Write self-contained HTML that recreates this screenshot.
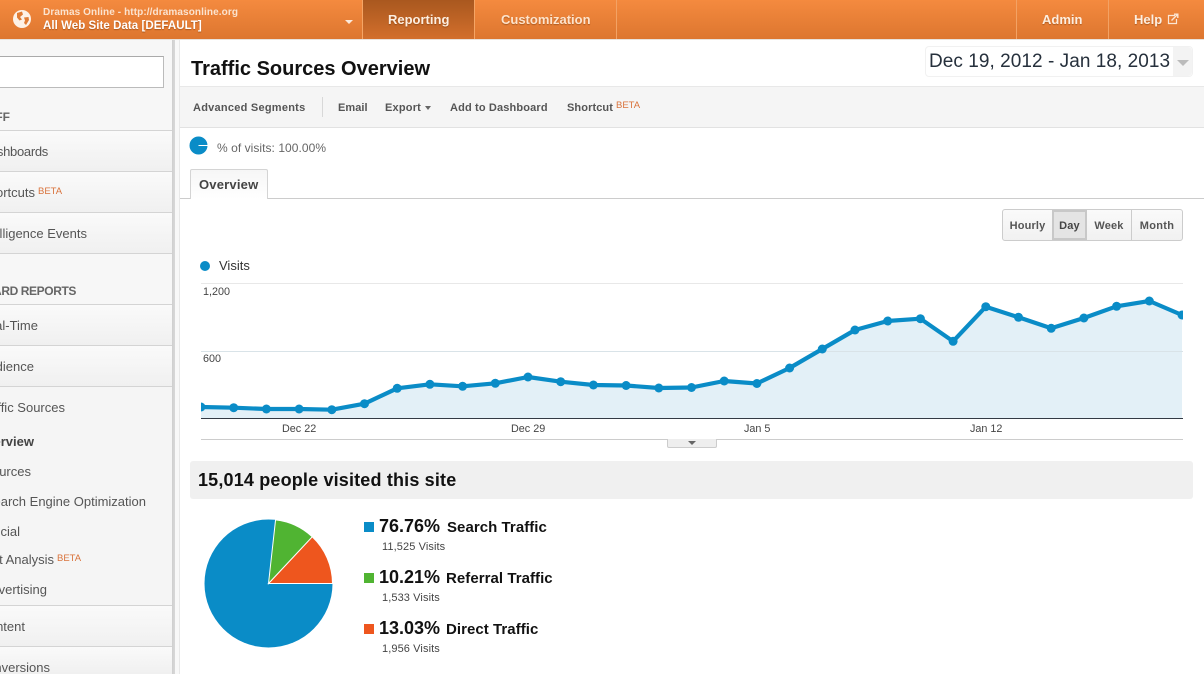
<!DOCTYPE html>
<html><head><meta charset="utf-8"><title>Traffic Sources Overview</title>
<style>
html,body{margin:0;padding:0;width:1204px;height:674px;overflow:hidden;background:#fff;font-family:"Liberation Sans",Arial,sans-serif}
#w{position:relative;width:1204px;height:674px;overflow:hidden}
.a,.t,.r{position:absolute;white-space:nowrap}
.r{line-height:16px;font-size:13px;color:#555;margin-top:1px}
.n{color:#fff;font-weight:bold;font-size:13px;line-height:16px;text-shadow:0 1px 1px rgba(90,40,0,.4)}
.sep{position:absolute;left:0;width:172px;height:1px;background:#d4d4d4}
.sb{position:absolute;left:0;width:172px;background:linear-gradient(#fafafa,#f0f0f0)}
.beta{position:absolute;font-size:9.5px;line-height:10px;color:#d9733c;white-space:nowrap}
.tb{font-size:11px;font-weight:bold;color:#555;line-height:14px;position:absolute;white-space:nowrap;letter-spacing:.2px;margin-top:1px}
.v{color:#444;font-size:11px;line-height:12px;position:absolute;white-space:nowrap;letter-spacing:.1px;margin-top:1px}
.p{position:absolute;font-size:18px;font-weight:bold;color:#111;line-height:20px;white-space:nowrap}
.l{position:absolute;font-size:15px;font-weight:bold;color:#111;line-height:20px;white-space:nowrap;letter-spacing:.05px}
.sq{position:absolute;left:364px;width:10px;height:10px}
.rb{position:absolute;top:210px;height:30px;line-height:32px;text-align:center;font-size:11px;font-weight:bold;color:#555;box-sizing:border-box;letter-spacing:.15px}
.ax{position:absolute;font-size:10.8px;color:#444;line-height:12px;white-space:nowrap}
</style></head><body><div id="w">

<!-- top bar -->
<div class="a" style="left:0;top:0;width:1204px;height:39px;background:linear-gradient(#f48a3f,#dd762f)"></div>
<div class="a" style="left:0;top:39px;width:1204px;height:1px;background:#e8e2dc"></div>
<svg class="a" style="left:12px;top:9px" width="20" height="20" viewBox="0 0 20 20"><circle cx="10" cy="10" r="9" fill="#fdf1e6"/><path d="M5 4 L10 2.5 L11 5.5 L8 8 L10 10.5 L7.5 11.5 L5 8.5Z M12 8.5 L16.5 8 L17 11 L14 16 L12 14 L13 11.5Z" fill="#e07c35"/></svg>
<div class="a" style="left:43px;top:6px;font-size:10px;line-height:13px;color:#fbe3cf;font-weight:bold;letter-spacing:.1px">Dramas Online - http://dramasonline.org</div>
<div class="a n" style="left:43px;top:18px;font-size:11.5px;letter-spacing:.05px">All Web Site Data [DEFAULT]</div>
<div class="a" style="left:345px;top:20px;width:0;height:0;border-left:4px solid transparent;border-right:4px solid transparent;border-top:4px solid #fbeadb"></div>
<div class="a" style="left:362px;top:0;width:1px;height:39px;background:#f5a565"></div>
<div class="a" style="left:363px;top:0;width:112px;height:39px;background:linear-gradient(#a9581f,#d36f2c);border-right:1px solid #f5a565;box-sizing:border-box"></div>
<div class="a n" style="left:388px;top:12px;color:#fdeee0">Reporting</div>
<div class="a n" style="left:501px;top:12px;color:#fde3cc">Customization</div>
<div class="a" style="left:616px;top:0;width:1px;height:39px;background:#f3a264"></div>
<div class="a" style="left:1016px;top:0;width:1px;height:39px;background:#f3a264"></div>
<div class="a" style="left:1108px;top:0;width:1px;height:39px;background:#f3a264"></div>
<div class="a n" style="left:1042px;top:12px;color:#fdeee0">Admin</div>
<div class="a n" style="left:1134px;top:12px;color:#fdeee0">Help</div>
<svg class="a" style="left:1167px;top:13px" width="12" height="12" viewBox="0 0 12 12"><path d="M8 2.5H1.5V10.5H9.5V6" fill="none" stroke="#fbe6d4" stroke-width="1.2"/><path d="M4.5 7.5 L10 2 M7 1.2H10.8V5" fill="none" stroke="#fbe6d4" stroke-width="1.4"/></svg>

<!-- sidebar -->
<div class="a" style="left:0;top:40px;width:172px;height:634px;background:#f5f5f5"></div>
<div class="sb" style="top:40px;height:90px;background:#f7f7f7"></div>
<div class="sb" style="top:131px;height:40px"></div>
<div class="sb" style="top:172px;height:40px"></div>
<div class="sb" style="top:213px;height:40px"></div>
<div class="sb" style="top:254px;height:50px;background:#f7f7f7"></div>
<div class="sb" style="top:305px;height:40px"></div>
<div class="sb" style="top:346px;height:40px"></div>
<div class="sb" style="top:606px;height:40px"></div>
<div class="sb" style="top:647px;height:27px"></div>
<div class="sep" style="top:130px"></div><div class="sep" style="top:171px"></div><div class="sep" style="top:212px"></div><div class="sep" style="top:253px"></div><div class="sep" style="top:304px"></div><div class="sep" style="top:345px"></div><div class="sep" style="top:386px"></div><div class="sep" style="top:605px"></div><div class="sep" style="top:646px"></div>
<div class="a" style="left:172px;top:40px;width:3px;height:634px;background:linear-gradient(90deg,#cfcfcf,#d8d8d8)"></div>
<div class="a" style="left:175px;top:40px;width:4px;height:634px;background:#f8f8f8"></div>
<div class="a" style="left:179px;top:40px;width:1px;height:634px;background:#e8e8e8"></div>
<div class="a" style="left:-5px;top:56px;width:169px;height:32px;box-sizing:border-box;border:1px solid #bbb;border-top-color:#aaa;background:#fff"></div>

<div class="r" style="right:1194px;top:108px;font-weight:bold;font-size:12px;color:#666">MY STUFF</div>
<div class="r" style="right:1156px;top:143px;letter-spacing:-.3px">Dashboards</div>
<div class="r" style="right:1169px;top:184px">Shortcuts</div>
<div class="beta" style="left:38px;top:187px">BETA</div>
<div class="r" style="right:1117px;top:225px">Intelligence Events</div>
<div class="r" style="right:1128px;top:282px;font-weight:bold;font-size:12px;color:#666;letter-spacing:-.4px">STANDARD REPORTS</div>
<div class="r" style="right:1166px;top:317px">Real-Time</div>
<div class="r" style="right:1170px;top:358px">Audience</div>
<div class="r" style="right:1139px;top:399px">Traffic Sources</div>
<div class="r" style="right:1170px;top:433px;font-weight:bold;color:#444">Overview</div>
<div class="r" style="right:1173px;top:463px">Sources</div>
<div class="r" style="right:1058px;top:493px">Search Engine Optimization</div>
<div class="r" style="right:1184px;top:523px">Social</div>
<div class="r" style="right:1150px;top:551px">Cost Analysis</div>
<div class="beta" style="left:57px;top:554px">BETA</div>
<div class="r" style="right:1157px;top:581px">Advertising</div>
<div class="r" style="right:1179px;top:618px">Content</div>
<div class="r" style="right:1154px;top:659px">Conversions</div>

<!-- title -->
<div class="a" style="left:191px;top:57px;font-size:20px;line-height:24px;font-weight:bold;color:#111">Traffic Sources Overview</div>
<div class="a" style="left:925px;top:46px;width:268px;height:31px;box-sizing:border-box;border:1px solid #f1f1f1;border-radius:4px;background:#fff"></div>
<div class="a" style="left:1173px;top:47px;width:19px;height:29px;background:#f3f3f3;border-radius:0 4px 4px 0"></div>
<div class="a" style="left:929px;top:50px;font-size:19px;line-height:23px;color:#26303c;letter-spacing:.05px">Dec 19, 2012 - Jan 18, 2013</div>
<div class="a" style="left:1177px;top:60px;width:0;height:0;border-left:6px solid transparent;border-right:6px solid transparent;border-top:6px solid #bbb"></div>

<!-- toolbar -->
<div class="a" style="left:180px;top:86px;width:1024px;height:42px;box-sizing:border-box;background:#f5f5f5;border-top:1px solid #e8e8e8;border-bottom:1px solid #e2e2e2"></div>
<div class="tb" style="left:193px;top:100px;letter-spacing:.25px">Advanced Segments</div>
<div class="a" style="left:322px;top:97px;width:1px;height:20px;background:#d8d8d8"></div>
<div class="tb" style="left:338px;top:100px;letter-spacing:.05px">Email</div>
<div class="tb" style="left:385px;top:100px">Export</div>
<div class="a" style="left:425px;top:106px;width:0;height:0;border-left:3.5px solid transparent;border-right:3.5px solid transparent;border-top:4px solid #666"></div>
<div class="tb" style="left:450px;top:100px;letter-spacing:.15px">Add to Dashboard</div>
<div class="tb" style="left:567px;top:100px;letter-spacing:.1px">Shortcut</div>
<div class="beta" style="left:616px;top:101px">BETA</div>

<!-- segment -->
<svg class="a" style="left:189px;top:136px" width="19" height="19" viewBox="0 0 19 19"><circle cx="9.500" cy="9.500" r="9" fill="#0a8cc7"/><path d="M9.500 9.500H18.500" stroke="#fff" stroke-width="1"/></svg>
<div class="a" style="left:217px;top:141px;font-size:12px;line-height:15px;color:#666;letter-spacing:.05px">% of visits: 100.00%</div>

<!-- tab -->
<div class="a" style="left:180px;top:198px;width:1024px;height:1px;background:#ccc"></div>
<div class="a" style="left:190px;top:169px;width:78px;height:30px;box-sizing:border-box;border:1px solid #d4d4d4;border-bottom:none;background:linear-gradient(#f6f6f6,#fff);border-radius:2px 2px 0 0"></div>
<div class="a" style="left:199px;top:177px;font-size:13px;line-height:16px;font-weight:bold;color:#444;letter-spacing:.2px">Overview</div>

<!-- range buttons -->
<div class="a" style="left:1002px;top:209px;width:181px;height:32px;box-sizing:border-box;border:1px solid #ccc;border-radius:3px;background:linear-gradient(#fafafa,#f1f1f1)"></div>
<div class="rb" style="left:1003px;width:49px;">Hourly</div>
<div class="rb" style="left:1052px;width:35px;background:#e4e4e4;border:2px solid #c8c8c8;line-height:28px;color:#444">Day</div>
<div class="rb" style="left:1087px;width:45px;border-right:1px solid #ccc">Week</div>
<div class="rb" style="left:1132px;width:50px;letter-spacing:.3px">Month</div>

<!-- legend -->
<div class="a" style="left:200px;top:261px;width:10px;height:10px;border-radius:50%;background:#0a8cc7"></div>
<div class="a" style="left:219px;top:258px;font-size:13px;line-height:16px;color:#333">Visits</div>

<!-- chart -->
<svg class="a" style="left:0;top:0" width="1204" height="674" viewBox="0 0 1204 674">
<defs><clipPath id="c"><rect x="201" y="270" width="982" height="160"/></clipPath></defs>
<line x1="201" x2="1183" y1="283.500" y2="283.500" stroke="#e8e8e8"/>
<g clip-path="url(#c)">
<path d="M201 407 233.700 407.700 266.400 409 299.100 409 331.800 409.700 364.500 403.700 397.200 388.300 429.900 384.300 462.600 386.300 495.300 383.300 528 377 560.700 381.700 593.400 385 626.100 385.500 658.800 388 691.500 387.500 724.200 381 756.900 383.500 789.600 368 822.300 349 855 330 887.700 321 920.400 318.700 953.100 341.300 985.800 306.700 1018.500 317.300 1051.200 328.300 1083.900 318 1116.600 306.300 1149.300 301 1182 315 V418 H201Z" fill="#e3f0f7"/>
<line x1="201" x2="1183" y1="351.500" y2="351.500" stroke="#d9e3e8"/>
<path d="M201 407 233.700 407.700 266.400 409 299.100 409 331.800 409.700 364.500 403.700 397.200 388.300 429.900 384.300 462.600 386.300 495.300 383.300 528 377 560.700 381.700 593.400 385 626.100 385.500 658.800 388 691.500 387.500 724.200 381 756.900 383.500 789.600 368 822.300 349 855 330 887.700 321 920.400 318.700 953.100 341.300 985.800 306.700 1018.500 317.300 1051.200 328.300 1083.900 318 1116.600 306.300 1149.300 301 1182 315" fill="none" stroke="#0a8cc7" stroke-width="4.200" stroke-linejoin="round"/>
<g fill="#0a8cc7">
<circle cx="201" cy="407" r="4.500"/><circle cx="233.700" cy="407.700" r="4.500"/><circle cx="266.400" cy="409" r="4.500"/><circle cx="299.100" cy="409" r="4.500"/><circle cx="331.800" cy="409.700" r="4.500"/><circle cx="364.500" cy="403.700" r="4.500"/><circle cx="397.200" cy="388.300" r="4.500"/><circle cx="429.900" cy="384.300" r="4.500"/><circle cx="462.600" cy="386.300" r="4.500"/><circle cx="495.300" cy="383.300" r="4.500"/><circle cx="528" cy="377" r="4.500"/><circle cx="560.700" cy="381.700" r="4.500"/><circle cx="593.400" cy="385" r="4.500"/><circle cx="626.100" cy="385.500" r="4.500"/><circle cx="658.800" cy="388" r="4.500"/><circle cx="691.500" cy="387.500" r="4.500"/><circle cx="724.200" cy="381" r="4.500"/><circle cx="756.900" cy="383.500" r="4.500"/><circle cx="789.600" cy="368" r="4.500"/><circle cx="822.300" cy="349" r="4.500"/><circle cx="855" cy="330" r="4.500"/><circle cx="887.700" cy="321" r="4.500"/><circle cx="920.400" cy="318.700" r="4.500"/><circle cx="953.100" cy="341.300" r="4.500"/><circle cx="985.800" cy="306.700" r="4.500"/><circle cx="1018.500" cy="317.300" r="4.500"/><circle cx="1051.200" cy="328.300" r="4.500"/><circle cx="1083.900" cy="318" r="4.500"/><circle cx="1116.600" cy="306.300" r="4.500"/><circle cx="1149.300" cy="301" r="4.500"/><circle cx="1182" cy="315" r="4.500"/>
</g>
</g>
<line x1="201" x2="1183" y1="418.500" y2="418.500" stroke="#333a44"/>
<line x1="201" x2="1183" y1="439.500" y2="439.500" stroke="#ccc"/>
<!-- pie -->
<circle cx="268.500" cy="583.500" r="64" fill="#0a8cc7"/>
<path d="M268.500 583.500 L332.500 583.500 A64 64 0 0 0 312.200 536.800Z" fill="#ee561e" stroke="#fff" stroke-width="1"/>
<path d="M268.500 583.500 L312.200 536.800 A64 64 0 0 0 275.550 519.900Z" fill="#50b432" stroke="#fff" stroke-width="1"/>
</svg>
<div class="ax" style="left:203px;top:286px">1,200</div>
<div class="ax" style="left:203px;top:353px">600</div>
<div class="ax" style="left:282px;top:423px">Dec 22</div>
<div class="ax" style="left:511px;top:423px">Dec 29</div>
<div class="ax" style="left:744px;top:423px">Jan 5</div>
<div class="ax" style="left:970px;top:423px">Jan 12</div>
<div class="a" style="left:667px;top:439px;width:50px;height:9px;box-sizing:border-box;border:1px solid #ccc;border-top:none;background:#eee;border-radius:0 0 2px 2px"></div>
<div class="a" style="left:688px;top:441px;width:0;height:0;border-left:4px solid transparent;border-right:4px solid transparent;border-top:4px solid #666"></div>

<!-- summary -->
<div class="a" style="left:190px;top:461px;width:1003px;height:38px;background:#f0f0f0;border-radius:3px"></div>
<div class="a" style="left:198px;top:469px;font-size:18px;line-height:22px;font-weight:bold;color:#111;letter-spacing:.17px">15,014 people visited this site</div>

<div class="sq" style="top:522px;background:#0a8cc7"></div>
<div class="p" style="left:379px;top:516px">76.76%</div>
<div class="l" style="left:447px;top:518px">Search Traffic</div>
<div class="v" style="left:382px;top:540px">11,525 Visits</div>

<div class="sq" style="top:573px;background:#50b432"></div>
<div class="p" style="left:379px;top:567px">10.21%</div>
<div class="l" style="left:446px;top:569px">Referral Traffic</div>
<div class="v" style="left:382px;top:591px">1,533 Visits</div>

<div class="sq" style="top:624px;background:#ee561e"></div>
<div class="p" style="left:379px;top:618px">13.03%</div>
<div class="l" style="left:446px;top:620px">Direct Traffic</div>
<div class="v" style="left:382px;top:642px">1,956 Visits</div>

</div></body></html>
